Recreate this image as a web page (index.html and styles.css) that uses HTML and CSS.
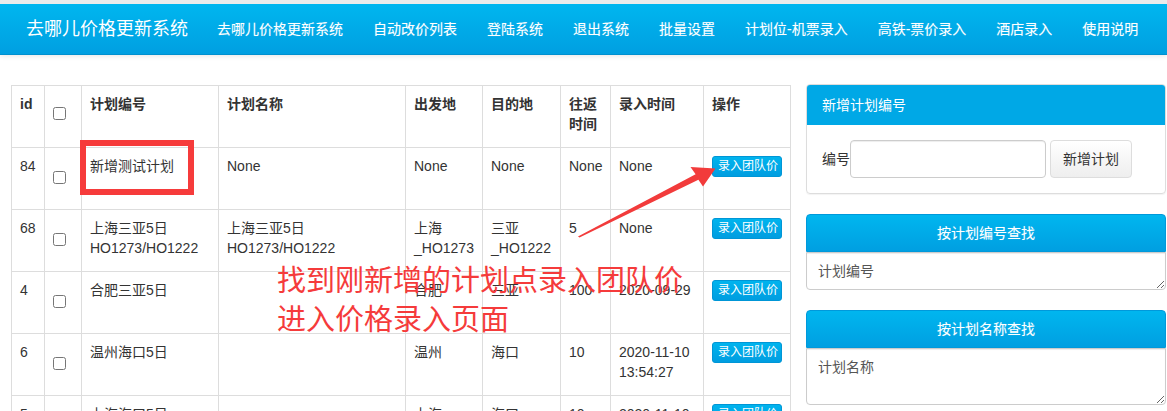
FILE: index.html
```html
<!DOCTYPE html>
<html lang="zh-CN">
<head>
<meta charset="utf-8">
<title>去哪儿价格更新系统</title>
<link rel="stylesheet" href="styles.css">
</head>
<body>
<nav class="navbar">
  <span class="brand">去哪儿价格更新系统</span>
  <a class="nav-item">去哪儿价格更新系统</a>
  <a class="nav-item">自动改价列表</a>
  <a class="nav-item">登陆系统</a>
  <a class="nav-item">退出系统</a>
  <a class="nav-item">批量设置</a>
  <a class="nav-item">计划位-机票录入</a>
  <a class="nav-item">高铁-票价录入</a>
  <a class="nav-item">酒店录入</a>
  <a class="nav-item">使用说明</a>
</nav>

<div class="main">
  <div class="left">
    <table class="grid">
      <colgroup>
        <col class="c-id"><col class="c-chk"><col class="c-no"><col class="c-name"><col class="c-from"><col class="c-to"><col class="c-days"><col class="c-time"><col class="c-op">
      </colgroup>
      <thead>
        <tr>
          <th>id</th>
          <th><input type="checkbox" class="chk-head"></th>
          <th>计划编号</th>
          <th>计划名称</th>
          <th>出发地</th>
          <th>目的地</th>
          <th>往返时间</th>
          <th>录入时间</th>
          <th>操作</th>
        </tr>
      </thead>
      <tbody>
        <tr>
          <td>84</td>
          <td><input type="checkbox" class="chk"></td>
          <td>新增测试计划</td>
          <td>None</td>
          <td>None</td>
          <td>None</td>
          <td>None</td>
          <td>None</td>
          <td><button class="btn-team">录入团队价</button></td>
        </tr>
        <tr>
          <td>68</td>
          <td><input type="checkbox" class="chk"></td>
          <td>上海三亚5日<br>HO1273/HO1222</td>
          <td>上海三亚5日<br>HO1273/HO1222</td>
          <td>上海<br>_HO1273</td>
          <td>三亚<br>_HO1222</td>
          <td>5</td>
          <td>None</td>
          <td><button class="btn-team">录入团队价</button></td>
        </tr>
        <tr>
          <td>4</td>
          <td><input type="checkbox" class="chk"></td>
          <td>合肥三亚5日</td>
          <td></td>
          <td>合肥</td>
          <td>三亚</td>
          <td>100</td>
          <td>2020-09-29</td>
          <td><button class="btn-team">录入团队价</button></td>
        </tr>
        <tr>
          <td>6</td>
          <td><input type="checkbox" class="chk"></td>
          <td>温州海口5日</td>
          <td></td>
          <td>温州</td>
          <td>海口</td>
          <td>10</td>
          <td>2020-11-10 13:54:27</td>
          <td><button class="btn-team">录入团队价</button></td>
        </tr>
        <tr>
          <td>5</td>
          <td><input type="checkbox" class="chk"></td>
          <td>上海海口5日</td>
          <td></td>
          <td>上海</td>
          <td>海口</td>
          <td>10</td>
          <td>2020-11-10 13:54:27</td>
          <td><button class="btn-team">录入团队价</button></td>
        </tr>
      </tbody>
    </table>
  </div>

  <div class="right">
    <div class="panel">
      <div class="panel-heading">新增计划编号</div>
      <div class="panel-body">
        <label class="lbl">编号</label>
        <input type="text" class="txt">
        <button class="btn-default">新增计划</button>
      </div>
    </div>

    <div class="search">
      <button class="btn-blue">按计划编号查找</button>
      <textarea class="area area-sm" placeholder="计划编号"></textarea>
    </div>

    <div class="search">
      <button class="btn-blue">按计划名称查找</button>
      <textarea class="area area-lg" placeholder="计划名称"></textarea>
    </div>
  </div>
</div>

<div class="annot">
  <div class="red-box"></div>
  <div class="note">找到刚新增的计划点录入团队价<br>进入价格录入页面</div>
  <svg class="arrow" width="1167" height="411" viewBox="0 0 1167 411">
    <polygon points="578,236.5 695.6,174.3 690.5,167 715.5,168.5 703,186.5 698.4,179.7 579.5,237.5" fill="#f23b3b"/>
  </svg>
</div>
</body>
</html>
```

FILE: styles.css
```css
html, body {
  margin: 0;
  padding: 0;
  background: #fff;
}

body {
  font-family: "Liberation Sans", "Noto Sans CJK SC", sans-serif;
  font-size: 14px;
  line-height: 20px;
  color: #333;
  position: relative;
  height: 411px;
  overflow: hidden;
}

/* ---------- navbar ---------- */
.navbar {
  display: flex;
  align-items: center;
  height: 50px;
  border-top: 4px solid #ebebeb;
  background: linear-gradient(#00b6ef, #009fe1);
  box-shadow: 0 1px 0 #0090cf, 0 2px 5px rgba(0, 0, 0, 0.10);
}

.brand {
  font-size: 18px;
  color: #fff;
  padding-left: 26px;
  margin-right: 14px;
  white-space: nowrap;
}

.nav-item {
  color: #fff;
  padding: 0 15px;
  white-space: nowrap;
  text-shadow: 0 0 1px rgba(255, 255, 255, 0.35);
}

/* ---------- main layout ---------- */
.main {
  display: flex;
  gap: 16px;
  padding: 30px 1px 0 11px;
}

.left {
  width: 779px;
  flex: none;
  margin-top: 1px;
}

.right {
  width: 360px;
  flex: none;
  display: flex;
  flex-direction: column;
  gap: 20px;
}

/* ---------- table ---------- */
.grid {
  width: 779px;
  border-collapse: collapse;
  table-layout: fixed;
}

.c-id { width: 33px; }
.c-chk { width: 37px; }
.c-no { width: 137px; }
.c-name { width: 187px; }
.c-from { width: 77px; }
.c-to { width: 78px; }
.c-days { width: 50px; }
.c-time { width: 93px; }
.c-op { width: 87px; }

.grid tr {
  height: 62px;
}

.grid th,
.grid td {
  border: 1px solid #ddd;
  padding: 8px;
  vertical-align: top;
  text-align: left;
}

.grid th {
  font-weight: bold;
}

.chk,
.chk-head {
  width: 13px;
  height: 13px;
  margin: 0;
  display: block;
}

.chk-head { margin-top: 13px; }
.chk { margin-top: 15px; }

.btn-team {
  display: block;
  font-family: inherit;
  font-size: 12px;
  line-height: 17px;
  color: #fff;
  padding: 1px 5px;
  border: 1px solid #0096d6;
  border-radius: 3px;
  background: linear-gradient(#00b4ee, #009de0);
  white-space: nowrap;
  width: 70px;
  height: 21px;
  box-sizing: border-box;
}

/* ---------- right panels ---------- */
.panel {
  border: 1px solid #ddd;
  border-radius: 4px;
  overflow: hidden;
  box-shadow: 0 1px 1px rgba(0, 0, 0, 0.05);
}

.panel-heading {
  background: #00a8e6;
  color: #fff;
  padding: 10px 15px;
  line-height: 20px;
}

.panel-body {
  display: flex;
  align-items: center;
  padding: 15px;
  gap: 0;
}

.lbl {
  color: #333;
}

.txt {
  width: 196px;
  height: 38px;
  box-sizing: border-box;
  border: 1px solid #ccc;
  border-radius: 4px;
  box-shadow: inset 0 1px 1px rgba(0, 0, 0, 0.075);
  margin: 0 4px 0 0;
  padding: 6px 12px;
  font: inherit;
}

.btn-default {
  width: 82px;
  height: 38px;
  box-sizing: border-box;
  border: 1px solid #ddd;
  border-radius: 4px;
  background: linear-gradient(#fff, #eeeeee);
  color: #333;
  font: inherit;
  padding: 0;
}

.search {
  display: flex;
  flex-direction: column;
}

.btn-blue {
  height: 38px;
  border: 1px solid #0099db;
  border-radius: 4px 4px 0 0;
  background: linear-gradient(#00b6ef, #009fe1);
  color: #fff;
  font: inherit;
  line-height: 20px;
  padding: 0;
  text-shadow: 0 0 1px rgba(255, 255, 255, 0.3);
}

.area {
  display: block;
  width: 360px;
  box-sizing: border-box;
  border: 1px solid #ccc;
  border-radius: 0 0 4px 4px;
  padding: 8px 11px;
  font: inherit;
  line-height: 20px;
  color: #333;
  margin: 0;
  box-shadow: inset 0 1px 1px rgba(0, 0, 0, 0.075);
}

.area::placeholder {
  color: #555;
}

.area-sm { height: 38px; }
.area-lg { height: 57px; }

/* ---------- annotation overlay ---------- */
.annot {
  position: absolute;
  left: 0;
  top: 0;
  width: 1167px;
  height: 411px;
  pointer-events: none;
}

.red-box {
  position: absolute;
  left: 80px;
  top: 140px;
  width: 102px;
  height: 43px;
  border: 6px solid #f63b3b;
}

.note {
  position: absolute;
  left: 277px;
  top: 259px;
  font-family: "Noto Sans CJK SC", sans-serif;
  font-size: 29px;
  line-height: 39px;
  color: #f53b3b;
  white-space: nowrap;
}

.arrow {
  position: absolute;
  left: 0;
  top: 0;
}
```
